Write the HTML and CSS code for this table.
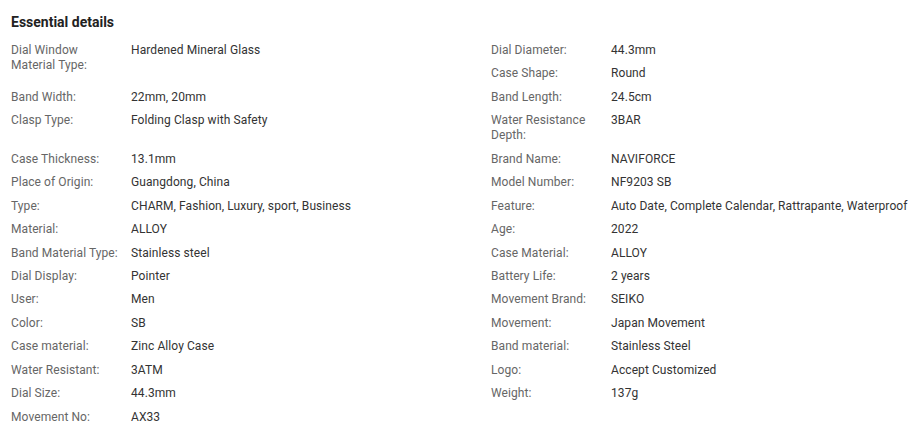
FILE: index.html
```html
<!DOCTYPE html>
<html lang="en">
<head>
<meta charset="utf-8">
<title>Essential details</title>
<link rel="stylesheet" href="styles.css">
</head>
<body>
<section class="details">
  <h2 class="details-title">Essential details</h2>
  <div class="attr-grid">
    <div class="attr attr-tall"><span class="attr-label">Dial Window Material Type:</span><span class="attr-value">Hardened Mineral Glass</span></div>
    <div class="attr"><span class="attr-label">Dial Diameter:</span><span class="attr-value">44.3mm</span></div>
    <div class="attr"><span class="attr-label">Case Shape:</span><span class="attr-value">Round</span></div>
    <div class="attr"><span class="attr-label">Band Width:</span><span class="attr-value">22mm, 20mm</span></div>
    <div class="attr"><span class="attr-label">Band Length:</span><span class="attr-value">24.5cm</span></div>
    <div class="attr"><span class="attr-label">Clasp Type:</span><span class="attr-value">Folding Clasp with Safety</span></div>
    <div class="attr"><span class="attr-label">Water Resistance Depth:</span><span class="attr-value">3BAR</span></div>
    <div class="attr"><span class="attr-label">Case Thickness:</span><span class="attr-value">13.1mm</span></div>
    <div class="attr"><span class="attr-label">Brand Name:</span><span class="attr-value">NAVIFORCE</span></div>
    <div class="attr"><span class="attr-label">Place of Origin:</span><span class="attr-value">Guangdong, China</span></div>
    <div class="attr"><span class="attr-label">Model Number:</span><span class="attr-value">NF9203 SB</span></div>
    <div class="attr"><span class="attr-label">Type:</span><span class="attr-value">CHARM, Fashion, Luxury, sport, Business</span></div>
    <div class="attr"><span class="attr-label">Feature:</span><span class="attr-value">Auto Date, Complete Calendar, Rattrapante, Waterproof</span></div>
    <div class="attr"><span class="attr-label">Material:</span><span class="attr-value">ALLOY</span></div>
    <div class="attr"><span class="attr-label">Age:</span><span class="attr-value">2022</span></div>
    <div class="attr"><span class="attr-label">Band Material Type:</span><span class="attr-value">Stainless steel</span></div>
    <div class="attr"><span class="attr-label">Case Material:</span><span class="attr-value">ALLOY</span></div>
    <div class="attr"><span class="attr-label">Dial Display:</span><span class="attr-value">Pointer</span></div>
    <div class="attr"><span class="attr-label">Battery Life:</span><span class="attr-value">2 years</span></div>
    <div class="attr"><span class="attr-label">User:</span><span class="attr-value">Men</span></div>
    <div class="attr"><span class="attr-label">Movement Brand:</span><span class="attr-value">SEIKO</span></div>
    <div class="attr"><span class="attr-label">Color:</span><span class="attr-value">SB</span></div>
    <div class="attr"><span class="attr-label">Movement:</span><span class="attr-value">Japan Movement</span></div>
    <div class="attr"><span class="attr-label">Case material:</span><span class="attr-value">Zinc Alloy Case</span></div>
    <div class="attr"><span class="attr-label">Band material:</span><span class="attr-value">Stainless Steel</span></div>
    <div class="attr"><span class="attr-label">Water Resistant:</span><span class="attr-value">3ATM</span></div>
    <div class="attr"><span class="attr-label">Logo:</span><span class="attr-value">Accept Customized</span></div>
    <div class="attr"><span class="attr-label">Dial Size:</span><span class="attr-value">44.3mm</span></div>
    <div class="attr"><span class="attr-label">Weight:</span><span class="attr-value">137g</span></div>
    <div class="attr"><span class="attr-label">Movement No:</span><span class="attr-value">AX33</span></div>
  </div>
</section>
</body>
</html>
```

FILE: styles.css
```css
html, body {
  margin: 0;
  padding: 0;
  background: #ffffff;
}

body {
  font-family: Roboto, "Liberation Sans", Arial, sans-serif;
  font-size: 12px;
  color: #333333;
  overflow: hidden;
}

.details {
  padding: 12px 0 0 11px;
}

.details-title {
  margin: 0 0 7px;
  font-size: 14px;
  line-height: 20px;
  font-weight: 700;
  color: #222222;
}

.attr-grid {
  display: grid;
  grid-template-columns: 480px 1fr;
  align-items: start;
  letter-spacing: 0.08px;
}

.attr {
  display: flex;
  align-items: flex-start;
  padding: 4px 0 4.45px;
  line-height: 15px;
}

.attr-tall {
  grid-row: span 2;
}

.attr-label {
  flex: 0 0 120px;
  box-sizing: border-box;
  padding-right: 10px;
  color: #666666;
}

.attr-value {
  flex: 1 1 auto;
  color: #333333;
  white-space: nowrap;
}
```
